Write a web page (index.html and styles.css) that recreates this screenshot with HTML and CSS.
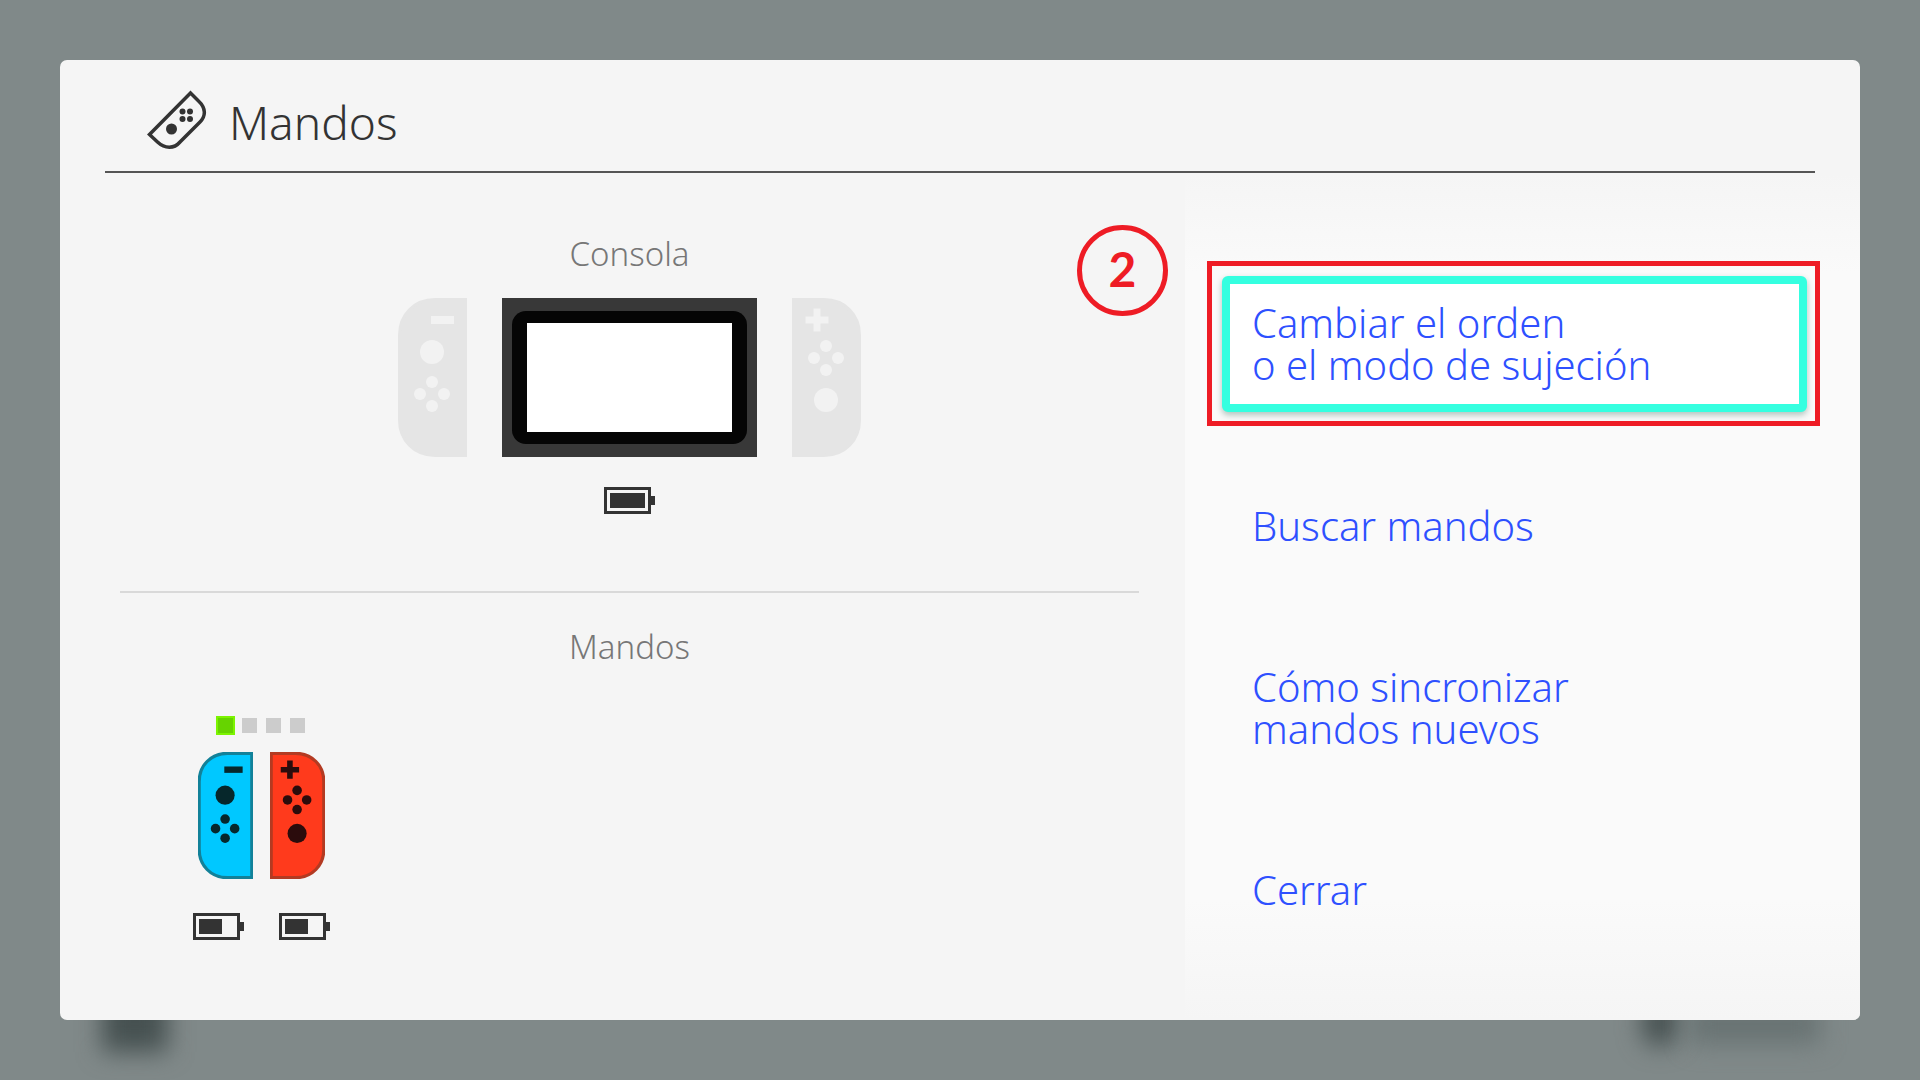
FILE: index.html
```html
<!DOCTYPE html>
<html lang="es">
<head>
<meta charset="utf-8">
<title>Mandos</title>
<meta name="viewport" content="width=device-width, initial-scale=1">
<link rel="stylesheet" href="styles.css">
</head>
<body>
<svg class="defs" aria-hidden="true">
  <symbol id="joycon-left" viewBox="0 0 69 159">
    <path class="shell" d="M67.5 1.5H37C16 1.5 1.5 17 1.5 37V122C1.5 142 16 157.500 37 157.500H67.500Z"/>
    <g class="keys">
      <rect x="33" y="18" width="23" height="8"/>
      <circle cx="34" cy="54" r="12"/>
      <circle cx="34" cy="84" r="6"/><circle cx="22" cy="96" r="6"/><circle cx="46" cy="96" r="6"/><circle cx="34" cy="108" r="6"/>
    </g>
  </symbol>
  <symbol id="joycon-right" viewBox="0 0 69 159">
    <path class="shell" d="M1.500 1.500H32C53 1.500 67.500 17 67.500 37V122C67.500 142 53 157.500 32 157.500H1.500Z"/>
    <g class="keys">
      <path d="M21.500 10.500H28.500V18.500H36.500V25.500H28.500V33.500H21.500V25.500H13.500V18.500H21.500Z"/>
      <circle cx="34" cy="48" r="6"/><circle cx="22" cy="60" r="6"/><circle cx="46" cy="60" r="6"/><circle cx="34" cy="72" r="6"/>
      <circle cx="34" cy="102" r="12"/>
    </g>
  </symbol>
</svg>
<div class="backdrop">
  <span class="shade shade-console"></span>
  <span class="shade shade-button"></span>
  <span class="shade shade-label"></span>
</div>
<main class="panel">
  <header class="header">
    <svg class="header-icon" viewBox="0 0 60 60" aria-hidden="true">
      <path d="M43.500 3L51.500 11C59 18 59 26 53 32L33 52C27 59 18 59 10.500 52L2.500 44.500Z" fill="none" stroke="#333" stroke-width="3.500"/>
      <circle cx="24.500" cy="39" r="5.500"/>
      <circle cx="35.500" cy="21.500" r="3"/><circle cx="43" cy="21.500" r="3"/><circle cx="35.500" cy="29" r="3"/><circle cx="43" cy="29" r="3"/>
    </svg>
    <h1>Mandos</h1>
  </header>
  <div class="content">
    <div class="status">
      <section class="console">
        <h2>Consola</h2>
        <div class="console-row">
          <svg class="joycon joycon-off"><use href="#joycon-left"/></svg>
          <div class="tablet"><div class="bezel"><div class="screen"></div></div></div>
          <svg class="joycon joycon-off"><use href="#joycon-right"/></svg>
        </div>
        <svg class="battery" viewBox="0 0 51 27"><path d="M1.500 1.500H45.500V25.500H1.500Z"/><rect x="47" y="9" width="4" height="9"/><rect x="6" y="6" width="35" height="15"/></svg>
      </section>
      <section class="controllers">
        <h2>Mandos</h2>
        <div class="controller">
          <div class="lights"><span class="light light-on"></span><span class="light"></span><span class="light"></span><span class="light"></span></div>
          <div class="pair">
            <svg class="joycon joycon-blue"><use href="#joycon-left"/></svg>
            <svg class="joycon joycon-red"><use href="#joycon-right"/></svg>
          </div>
          <div class="batteries">
            <svg class="battery" viewBox="0 0 51 27"><path d="M1.500 1.500H45.500V25.500H1.500Z"/><rect x="47" y="9" width="4" height="9"/><rect x="6" y="6" width="23" height="15"/></svg>
            <svg class="battery" viewBox="0 0 51 27"><path d="M1.500 1.500H45.500V25.500H1.500Z"/><rect x="47" y="9" width="4" height="9"/><rect x="6" y="6" width="23" height="15"/></svg>
          </div>
        </div>
      </section>
    </div>
    <nav class="menu">
      <div class="step">
        <button class="item selected" type="button">Cambiar el orden<br>o el modo de sujeción</button>
        <span class="step-frame"></span>
        <span class="step-number">2</span>
      </div>
      <button class="item" type="button">Buscar mandos</button>
      <button class="item" type="button">Cómo sincronizar<br>mandos nuevos</button>
      <button class="item" type="button">Cerrar</button>
    </nav>
  </div>
</main>
</body>
</html>
```
FILE: styles.css
```css
* { box-sizing: border-box; }

body {
  margin: 0;
  min-height: 100vh;
  padding: 60px;
  background: #808989;
  color: #333;
  font-family: "Noto Sans", "Open Sans", sans-serif;
  font-weight: 350;
}

h1, h2 { margin: 0; font-weight: 350; }
.defs { position: absolute; width: 0; height: 0; }

/* Blurred remains of the screen behind the dialog */
.backdrop { position: absolute; inset: 0; overflow: hidden; }
.shade { position: absolute; filter: blur(12px); background: #465151; }
.shade-console { left: 102px; bottom: 28px; width: 66px; height: 64px; }
.shade-button { right: 242px; bottom: 34px; width: 36px; height: 48px; border-radius: 16px; }
.shade-label { right: 100px; bottom: 36px; width: 130px; height: 40px; background: #687373; }

.panel {
  position: relative;
  display: flex;
  flex-direction: column;
  min-height: calc(100vh - 120px);
  border-radius: 7px;
  background: #f5f5f5;
  overflow: hidden;
}

.header {
  display: flex;
  align-items: center;
  gap: 22px;
  height: 113px;
  margin: 0 45px;
  padding: 8px 42px 0;
  border-bottom: 2px solid #555;
}
.header-icon { width: 60px; height: 60px; fill: #333; }
h1 { font-size: 46px; line-height: 60px; padding-top: 4px; }
h2 { color: #777; font-size: 33px; line-height: 44px; text-align: center; }

.content { display: grid; grid-template-columns: 5fr 3fr; flex: 1; }
.status { padding: 0 46px 0 60px; }

.console {
  display: flex;
  flex-direction: column;
  align-items: center;
  height: 420px;
  padding-top: 59px;
  border-bottom: 2px solid #d9d9d9;
}
.console-row { display: flex; justify-content: center; gap: 35px; margin: 22px 0 30px; }
.joycon { width: 69px; height: 159px; }
.joycon-off { --keys: #f2f2f2; fill: #e5e5e5; stroke: #e5e5e5; stroke-width: 3px; }
.keys { fill: var(--keys); stroke: none; }
.tablet { width: 255px; height: 159px; padding: 13px 10px; background: #383838; }
.bezel { height: 100%; padding: 12px 15px; border-radius: 14px; background: #050505; }
.screen { height: 100%; background: #fff; }

.battery { display: block; width: 51px; height: 27px; fill: #333; }
.battery path { fill: none; stroke: #333; stroke-width: 3px; }

.controllers { padding-top: 32px; }
.controller {
  display: flex;
  flex-direction: column;
  align-items: center;
  width: 137px;
  margin: 49px 0 0 73px;
}
.lights { display: flex; gap: 9px; }
.light { width: 15px; height: 15px; background: #ccc; }
.light-on { background: #66d400; box-shadow: 0 0 0 2px #7cf400; }
.pair { display: flex; gap: 17px; margin: 19px 0 34px; }
.pair .joycon { width: 55px; height: 127px; stroke-width: 4px; }
.joycon-blue { --keys: #06272b; fill: #00c8ff; stroke: #128199; }
.joycon-red { --keys: #2b0c0c; fill: #ff3a1c; stroke: #b33a22; }
.batteries { display: flex; gap: 35px; }

.menu {
  display: flex;
  flex-direction: column;
  gap: 46px;
  padding: 103px 53px 60px 37px;
  background: linear-gradient(#f5f5f5, #fafafa 100px, #fafafa calc(100% - 120px), #f5f5f5);
}
.step { position: relative; }
.item {
  display: block;
  width: 100%;
  height: 136px;
  padding: 0 22px;
  border: 8px solid transparent;
  background: none;
  color: #2e50ff;
  font: inherit;
  font-size: 40px;
  line-height: 42px;
  text-align: left;
  cursor: pointer;
}
.selected {
  border-color: #35ffe0;
  border-radius: 6px;
  background: #fff;
  box-shadow: 0 3px 6px rgba(0, 70, 50, 0.3);
}

/* Numbered callout drawn over the highlighted option */
.step-frame { position: absolute; inset: -15px -13px -14px -15px; border: 5px solid #ee1c25; }
.step-number {
  position: absolute;
  top: -51px;
  left: -145px;
  width: 91px;
  height: 91px;
  border: 5px solid #ee1c25;
  border-radius: 50%;
  color: #ee1c25;
  font-family: Lato, "Open Sans", sans-serif;
  font-size: 48px;
  font-weight: 700;
  line-height: 78px;
  text-align: center;
}
```
